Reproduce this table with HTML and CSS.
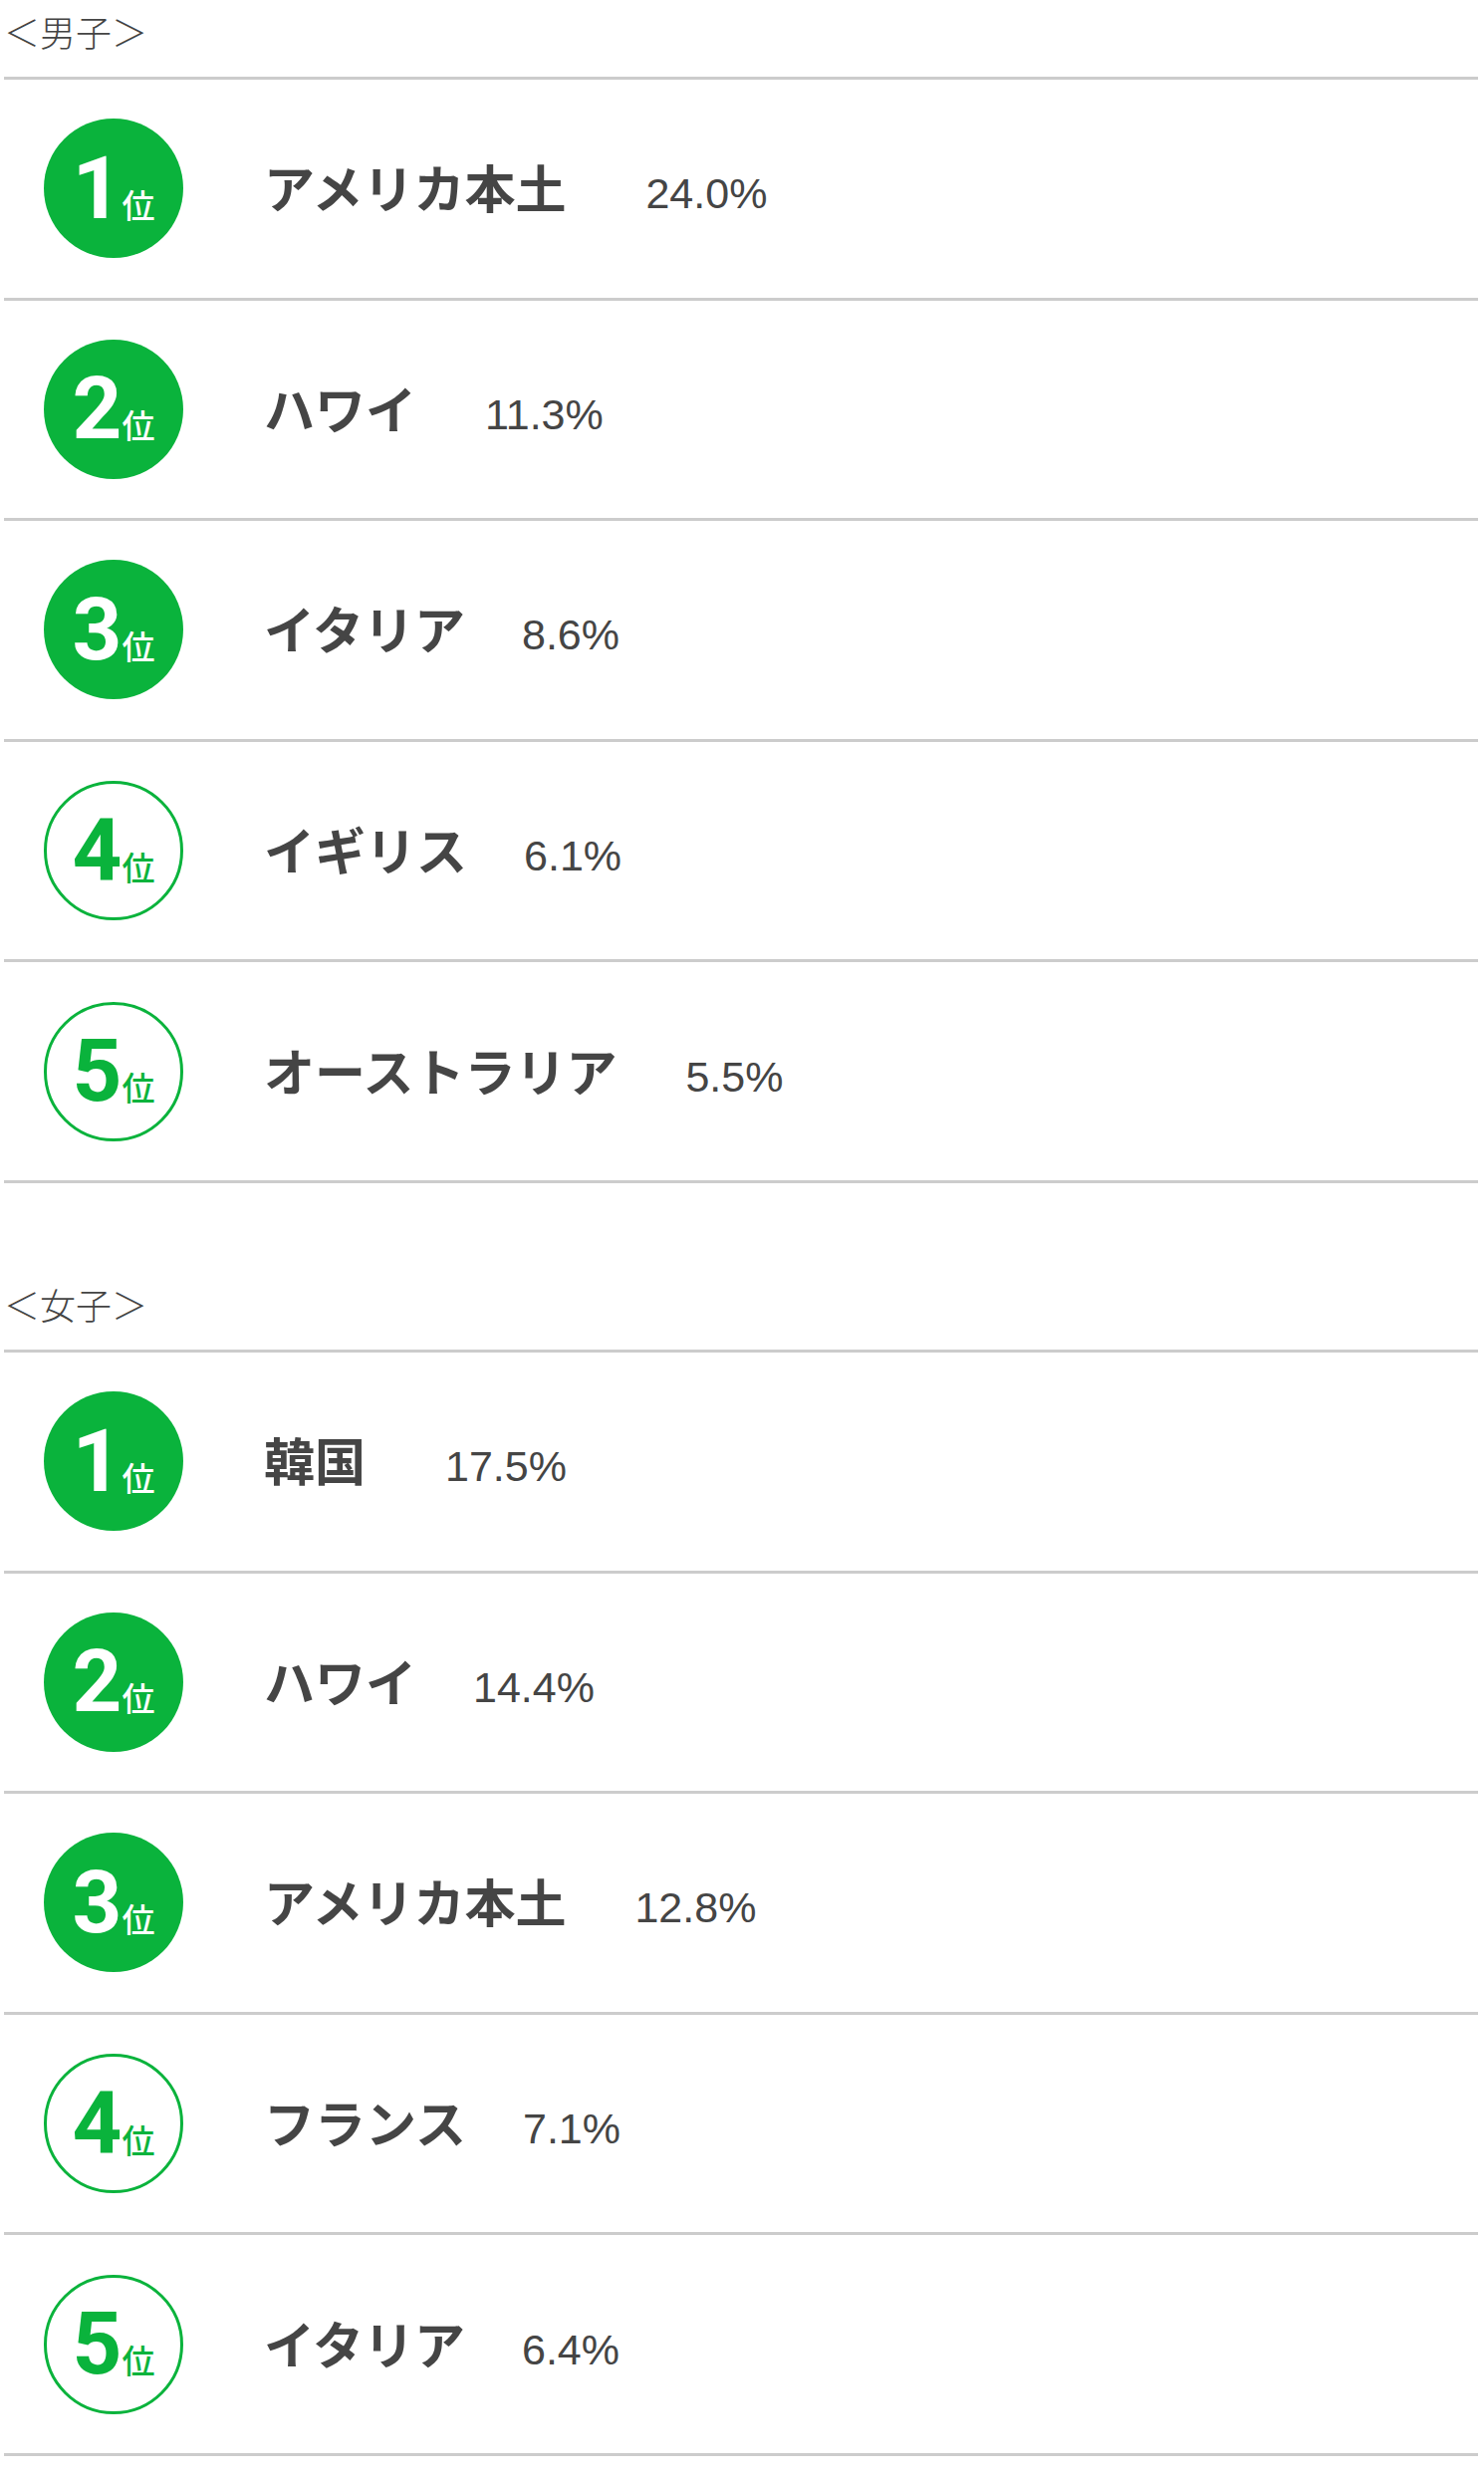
FILE: index.html
```html
<!DOCTYPE html>
<html lang="ja">
<head>
<meta charset="utf-8">
<title>ランキング</title>
<link rel="stylesheet" href="styles.css">
</head>
<body>
<div class="page">
  <section class="ranking">
    <h2 class="ranking-title">＜男子＞</h2>
    <ol class="rank-list">
      <li class="rank-row">
        <div class="badge badge-fill"><span class="badge-label"><span class="badge-num">1</span><span class="badge-unit">位</span></span></div>
        <div class="entry"><span class="entry-name">アメリカ本土</span><span class="entry-pct gap-l">24.0%</span></div>
      </li>
      <li class="rank-row">
        <div class="badge badge-fill"><span class="badge-label"><span class="badge-num">2</span><span class="badge-unit">位</span></span></div>
        <div class="entry"><span class="entry-name">ハワイ</span><span class="entry-pct gap-m">11.3%</span></div>
      </li>
      <li class="rank-row">
        <div class="badge badge-fill"><span class="badge-label"><span class="badge-num">3</span><span class="badge-unit">位</span></span></div>
        <div class="entry"><span class="entry-name">イタリア</span><span class="entry-pct gap-s">8.6%</span></div>
      </li>
      <li class="rank-row">
        <div class="badge badge-ring"><span class="badge-label"><span class="badge-num">4</span><span class="badge-unit">位</span></span></div>
        <div class="entry"><span class="entry-name">イギリス</span><span class="entry-pct gap-s">6.1%</span></div>
      </li>
      <li class="rank-row">
        <div class="badge badge-ring"><span class="badge-label"><span class="badge-num">5</span><span class="badge-unit">位</span></span></div>
        <div class="entry"><span class="entry-name">オーストラリア</span><span class="entry-pct gap-m">5.5%</span></div>
      </li>
    </ol>
  </section>

  <section class="ranking">
    <h2 class="ranking-title">＜女子＞</h2>
    <ol class="rank-list">
      <li class="rank-row">
        <div class="badge badge-fill"><span class="badge-label"><span class="badge-num">1</span><span class="badge-unit">位</span></span></div>
        <div class="entry"><span class="entry-name">韓国</span><span class="entry-pct gap-l">17.5%</span></div>
      </li>
      <li class="rank-row">
        <div class="badge badge-fill"><span class="badge-label"><span class="badge-num">2</span><span class="badge-unit">位</span></span></div>
        <div class="entry"><span class="entry-name">ハワイ</span><span class="entry-pct gap-s">14.4%</span></div>
      </li>
      <li class="rank-row">
        <div class="badge badge-fill"><span class="badge-label"><span class="badge-num">3</span><span class="badge-unit">位</span></span></div>
        <div class="entry"><span class="entry-name">アメリカ本土</span><span class="entry-pct gap-m">12.8%</span></div>
      </li>
      <li class="rank-row">
        <div class="badge badge-ring"><span class="badge-label"><span class="badge-num">4</span><span class="badge-unit">位</span></span></div>
        <div class="entry"><span class="entry-name">フランス</span><span class="entry-pct gap-s">7.1%</span></div>
      </li>
      <li class="rank-row">
        <div class="badge badge-ring"><span class="badge-label"><span class="badge-num">5</span><span class="badge-unit">位</span></span></div>
        <div class="entry"><span class="entry-name">イタリア</span><span class="entry-pct gap-s">6.4%</span></div>
      </li>
    </ol>
  </section>
</div>
</body>
</html>
```

FILE: styles.css
```css
body {
  margin: 0;
  background: #ffffff;
}

.page {
  width: 1480px;
  margin-left: 4px;
}

.ranking + .ranking {
  margin-top: 90px;
}

.ranking-title {
  margin: 0;
  height: 77px;
  font-family: "Noto Sans CJK JP", sans-serif;
  font-weight: 300;
  font-size: 36px;
  line-height: 62px;
  color: #444444;
}

.rank-list {
  list-style: none;
  margin: 0;
  padding: 0;
  border-top: 3px solid #cccccc;
}

.rank-row {
  height: 218.6px;
  border-bottom: 3px solid #cccccc;
  display: flex;
  align-items: center;
}

.badge {
  flex: 0 0 auto;
  width: 140px;
  height: 140px;
  margin-left: 40px;
  border-radius: 50%;
  box-sizing: border-box;
  display: flex;
  align-items: center;
  justify-content: center;
}

.badge-fill {
  background: #0ab33c;
  color: #ffffff;
}

.badge-ring {
  background: #ffffff;
  border: 3px solid #0ab33c;
  color: #0ab33c;
}

.badge-label {
  display: inline-flex;
  align-items: baseline;
}

.badge-num {
  font-family: Roboto, "Liberation Sans", sans-serif;
  font-weight: 700;
  font-size: 87px;
  line-height: 1;
}

.badge-unit {
  font-family: "Noto Sans CJK JP", sans-serif;
  font-weight: 500;
  font-size: 33px;
  line-height: 1;
}

.entry {
  margin-left: 81px;
  display: flex;
  align-items: baseline;
  color: #454545;
}

.entry-name {
  font-family: "Noto Sans CJK JP", sans-serif;
  font-weight: 700;
  font-size: 51px;
  line-height: 1;
}

.entry-pct {
  font-family: "Liberation Sans", sans-serif;
  font-weight: 400;
  font-size: 43px;
  line-height: 1;
}

.gap-s { margin-left: 57px; }
.gap-m { margin-left: 69px; }
.gap-l { margin-left: 80px; }
```
